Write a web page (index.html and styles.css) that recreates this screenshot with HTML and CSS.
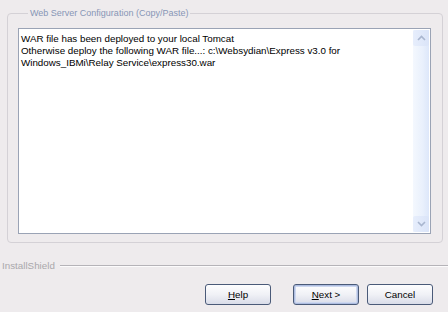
FILE: index.html
```html
<!doctype html>
<html lang="en">
  <head>
    <meta charset="UTF-8" />
    <title>Web Server Configuration</title>
    <link rel="stylesheet" href="styles.css">
  </head>
  <body>
    <div class="dialog">
      <fieldset class="group">
        <legend>Web Server Configuration (Copy/Paste)</legend>
        <div class="memo">
          <div class="memo-text">
            WAR file has been deployed to your local Tomcat<br>
            Otherwise deploy the following WAR file...: c:\Websydian\Express v3.0 for<br>
            Windows_IBMi\Relay Service\express30.war
          </div>
          <div class="scrollbar">
            <div class="scroll-btn">
              <svg width="9" height="6" viewBox="0 0 9 6"><path d="M1 5 L4.5 1.5 L8 5" fill="none" stroke="#a9b6cf" stroke-width="1.6"/></svg>
            </div>
            <div class="scroll-track"></div>
            <div class="scroll-btn">
              <svg width="9" height="6" viewBox="0 0 9 6"><path d="M1 1 L4.5 4.5 L8 1" fill="none" stroke="#a9b6cf" stroke-width="1.6"/></svg>
            </div>
          </div>
        </div>
      </fieldset>

      <div class="brand">
        <span class="brand-name">InstallShield</span>
        <span class="brand-line"></span>
      </div>

      <div class="buttons">
        <button class="btn btn-help"><u>H</u>elp</button>
        <button class="btn btn-default"><u>N</u>ext &gt;</button>
        <button class="btn">Cancel</button>
      </div>
    </div>
  </body>
</html>
```

FILE: styles.css
```css
body {
  margin: 0;
  background: #eeebed;
  width: 448px;
  height: 312px;
  overflow: hidden;
  color: #000;
  font-family: 'Liberation Sans', Arial, sans-serif;
  font-size: 9.8px;
}

.dialog {
  display: flex;
  flex-direction: column;
  height: 312px;
}

.group {
  margin: 7px 5px 0 7px;
  border: 1px solid #d4d1d6;
  border-radius: 4px;
  padding: 9px 11px 8px 10px;
}

.group legend {
  margin-left: 10px;
  padding: 0 2px;
  color: #8796b6;
  font-size: 9px;
  line-height: 12px;
}

.memo {
  display: flex;
  box-sizing: border-box;
  border: 1px solid #9aa3b5;
  background: #fff;
  height: 206px;
}

.memo-text {
  flex: 1;
  padding: 4px 2px;
  line-height: 12px;
}

.scrollbar {
  display: flex;
  flex-direction: column;
  margin: 1px 1px 1px 0;
  width: 16px;
  background: linear-gradient(90deg, #f4f8fe 0%, #e9f0fc 60%, #dde7fa 100%);
}

.scroll-btn {
  display: flex;
  justify-content: center;
  align-items: center;
  border-radius: 2px;
  background: linear-gradient(90deg, #e7eefc 0%, #dae4f8 100%);
  height: 16px;
}

.scroll-track {
  flex: 1;
}

.brand {
  display: flex;
  align-items: center;
  margin-top: 17px;
  padding-left: 2px;
}

.brand-name {
  color: #a9a7ab;
}

.brand-line {
  flex: 1;
  margin-left: 5px;
  border-top: 1px solid #b5b3b8;
  border-bottom: 1px solid #fcfbfc;
}

.buttons {
  display: flex;
  justify-content: flex-end;
  margin-top: 13px;
  padding-right: 15px;
}

.btn {
  box-sizing: border-box;
  margin-left: 8px;
  border: 1px solid #4a5a78;
  border-radius: 3px;
  background: linear-gradient(180deg, #fdfdfe 0%, #f0f1f6 50%, #d9dce8 100%);
  padding: 0;
  width: 66px;
  height: 21px;
  color: #000;
  font-family: 'Liberation Sans', Arial, sans-serif;
  font-size: 9.8px;
}

.btn-help {
  margin-right: 14px;
}

.btn-default {
  box-shadow: inset 0 0 0 1px #aebde0, inset 0 0 0 2px #cdd7ef;
}
```
